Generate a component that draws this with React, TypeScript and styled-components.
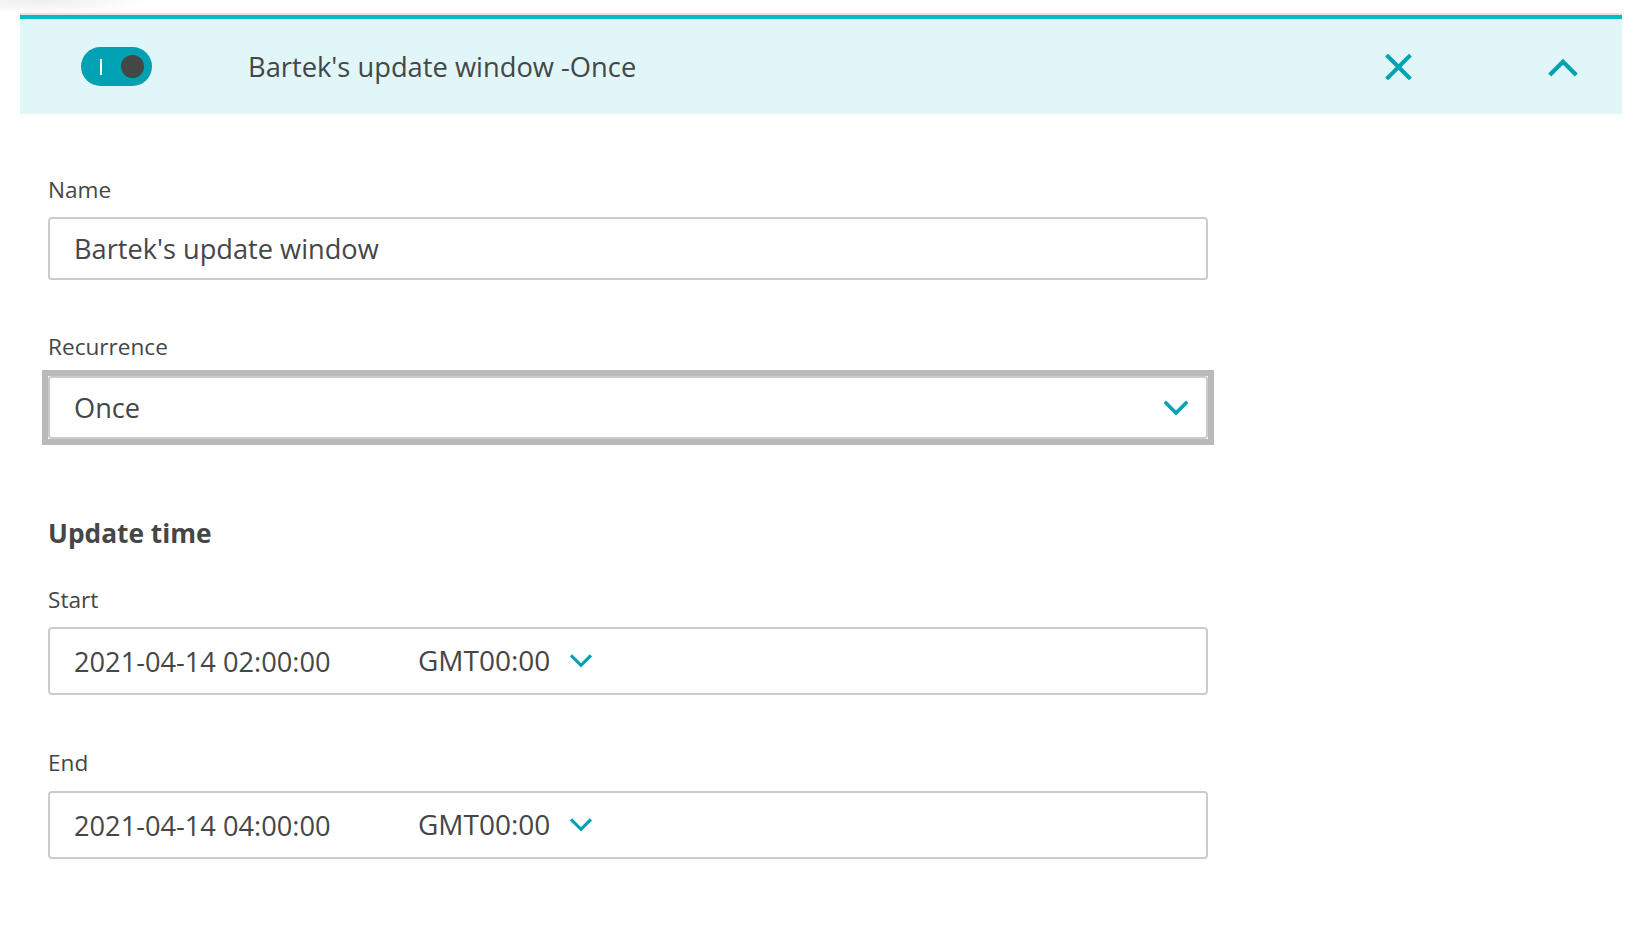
import React from "react";
import styled, { createGlobalStyle } from "styled-components";

const GlobalStyle = createGlobalStyle`
  html, body {
    margin: 0;
    padding: 0;
    background: #ffffff;
  }
  body {
    font-family: "Open Sans", "Noto Sans", Arial, sans-serif;
    color: #454646;
  }
`;

const Page = styled.div`
  min-height: 928px;
  padding: 13px 22px 0 20px;
  box-sizing: border-box;
  background: radial-gradient(ellipse 110px 14px at 40px 0px, rgba(0, 0, 0, 0.07), rgba(0, 0, 0, 0));
`;

const Panel = styled.section`
  width: 1602px;
  border-top: 2px solid #e3e3e3;
`;

const Header = styled.div`
  display: flex;
  align-items: center;
  height: 95px;
  padding: 0 44px 0 61px;
  border-top: 4px solid #00b9cc;
  background: #e0f6f9;
`;

const Toggle = styled.button`
  flex: none;
  display: flex;
  align-items: center;
  justify-content: space-between;
  width: 71px;
  height: 39px;
  padding: 0 8px 0 19px;
  border: none;
  border-radius: 20px;
  background: #00a1b2;
  cursor: pointer;
  box-sizing: border-box;
`;

const ToggleMark = styled.span`
  width: 2px;
  height: 16px;
  background: #ffffff;
`;

const ToggleKnob = styled.span`
  width: 23px;
  height: 23px;
  border-radius: 50%;
  background: #454646;
`;

const HeaderTitle = styled.h2`
  flex: 1;
  margin: 0 0 0 96px;
  font-size: 27.3px;
  font-weight: 400;
  line-height: 36px;
  color: #454646;
`;

const IconButton = styled.button<{ $gap?: number }>`
  display: flex;
  align-items: center;
  justify-content: center;
  padding: 0;
  margin-left: ${(p) => p.$gap ?? 0}px;
  border: none;
  background: transparent;
  cursor: pointer;
`;

const Body = styled.div`
  display: flex;
  flex-direction: column;
  align-items: flex-start;
  padding: 60px 0 40px 28px;
`;

const Label = styled.label<{ $top?: number }>`
  display: block;
  margin-top: ${(p) => p.$top ?? 0}px;
  font-size: 22.6px;
  line-height: 32px;
  color: #454646;
`;

const SectionTitle = styled.h3`
  margin: 76px 0 0;
  font-size: 26.3px;
  font-weight: 700;
  line-height: 36px;
  color: #454646;
`;

const FocusRing = styled.div`
  margin-top: 13px;
  outline: 6px solid #b9b9b9;
`;

const Field = styled.div<{ $height: number; $mt: number }>`
  display: flex;
  align-items: center;
  width: 1160px;
  height: ${(p) => p.$height}px;
  margin-top: ${(p) => p.$mt}px;
  padding: 0 18px 0 24px;
  border: 2px solid #cccccc;
  border-radius: 4px;
  background: #ffffff;
  box-sizing: border-box;
  font-size: 27.2px;
  color: #454646;
`;

const FieldText = styled.span`
  flex: 1;
  line-height: 36px;
`;

const DateText = styled.span`
  width: 344px;
  flex: none;
  line-height: 36px;
  padding-top: 1px;
`;

const Zone = styled.span`
  display: flex;
  align-items: center;
  gap: 19px;
  font-size: 28px;
  line-height: 36px;
  margin-bottom: 2px;
`;

const Chevron = ({ up = false, w = 24, h = 17 }: { up?: boolean; w?: number; h?: number }) => (
  <svg width={w} height={h} viewBox="0 0 24 17" fill="none">
    <polyline
      points={up ? "2,14 12,4 22,14" : "2,4 12,14 22,4"}
      stroke="#00a1b2"
      strokeWidth="3.6"
      strokeLinecap="square"
    />
  </svg>
);

const CloseIcon = () => (
  <svg width="27" height="26" viewBox="0 0 27 26" fill="none">
    <path d="M3 2.5 L24 23.5 M24 2.5 L3 23.5" stroke="#00a1b2" strokeWidth="4" strokeLinecap="square" />
  </svg>
);

const DateField = ({ value, mt }: { value: string; mt: number }) => (
  <Field $height={68} $mt={mt}>
    <DateText>{value}</DateText>
    <Zone>
      GMT00:00
      <Chevron w={24} h={15} />
    </Zone>
  </Field>
);

export default function App() {
  return (
    <>
      <GlobalStyle />
      <Page>
        <Panel>
          <Header>
            <Toggle aria-label="Enabled">
              <ToggleMark />
              <ToggleKnob />
            </Toggle>
            <HeaderTitle>Bartek's update window -Once</HeaderTitle>
            <IconButton aria-label="Delete">
              <CloseIcon />
            </IconButton>
            <IconButton aria-label="Collapse" $gap={136}>
              <Chevron up w={30} h={20} />
            </IconButton>
          </Header>
          <Body>
            <Label>Name</Label>
            <Field $height={63} $mt={11}>
              <FieldText>Bartek's update window</FieldText>
            </Field>

            <Label $top={51}>Recurrence</Label>
            <FocusRing>
              <Field $height={63} $mt={0}>
                <FieldText>Once</FieldText>
                <Chevron />
              </Field>
            </FocusRing>

            <SectionTitle>Update time</SectionTitle>

            <Label $top={33}>Start</Label>
            <DateField value="2021-04-14 02:00:00" mt={11} />

            <Label $top={52}>End</Label>
            <DateField value="2021-04-14 04:00:00" mt={12} />
          </Body>
        </Panel>
      </Page>
    </>
  );
}
